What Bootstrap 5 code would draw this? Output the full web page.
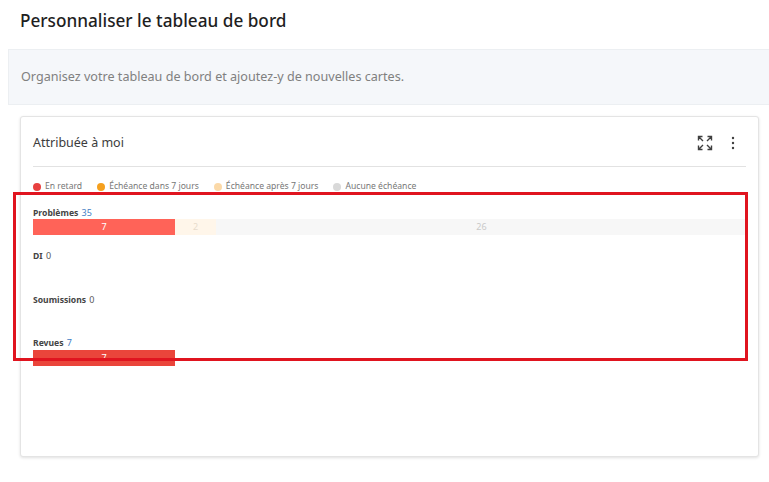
<!DOCTYPE html>
<html lang="fr"><head><meta charset="utf-8">
<link href="https://cdn.jsdelivr.net/npm/bootstrap@5.3.0/dist/css/bootstrap.min.css" rel="stylesheet">
<style>
html,body{height:482px;overflow:hidden;background:#fff}
body{font-family:"Noto Sans","Liberation Sans",sans-serif;color:#3c3c3c;position:relative}
.pg-head{height:49px;padding:9px 20px 0;margin:0}
.pg-title{font-size:17.2px;font-weight:500;line-height:24px;color:#1f1f1f;margin:0}
.sub-band{margin-left:8px;height:56px;background:#f5f7fa;border:1px solid #eceff2;border-right:0;padding-left:12px;font-size:12.6px;color:#808080}
.main-card{margin:11px 10px 0 20px;height:341px;border:1px solid #e4e4e4;border-radius:3px;box-shadow:0 1px 3px rgba(0,0,0,.12);padding:0 12px}
.card-top{height:50px;border-bottom:1px solid #e2e2e2;padding-top:3px}
.card-name{font-size:12.5px;color:#3c3c3c}
.ico-btn{display:block}
.tool-box{margin-right:7px;gap:18px}
.legend-row{height:38.5px;font-size:8.6px;color:#777;gap:15px;padding-top:1px}
.dot{width:8px;height:8px;border-radius:50%;display:inline-block;margin-right:4px}
.d-red{background:#e8403f}.d-org{background:#f5a01e}.d-pch{background:#fbd9a8}.d-gry{background:#d9d9d9}
.metric{height:43.6px}
.metric-head{font-size:8.6px;line-height:13px;height:13.5px;font-weight:700;color:#444}
.metric-num{font-weight:400;font-size:9px;margin-left:1px;color:#5a5a5a}
.metric-num.lnk{color:#3f80c4}
.bar-track{height:16px;display:flex;margin-right:-1px;font-size:9px;line-height:16px;text-align:center}
.seg{height:16px}
.s-red{background:#ff6358;color:#fff}.s-pch{background:#fff6ea;color:#e7dccd}.s-gry{background:#f7f7f7;color:#c9c9c9}
.s-dark{background:#ea453b;color:#fff}
.callout{position:absolute;left:13px;top:192px;width:735px;height:169px;border:3px solid #e0141f;pointer-events:none}
</style></head><body>
<header class="pg-head"><h1 class="pg-title">Personnaliser le tableau de bord</h1></header>
<div class="sub-band d-flex align-items-center">Organisez votre tableau de bord et ajoutez-y de nouvelles cartes.</div>
<section class="main-card bg-white">
 <div class="card-top d-flex align-items-center justify-content-between">
  <span class="card-name">Attribuée à moi</span>
  <div class="tool-box d-flex align-items-center">
   <svg class="ico-btn" width="16" height="16" viewBox="0 0 16 16" fill="none" stroke="#3f3f3f" stroke-width="1.4"><path d="M1.5 5.5v-4h4M1.5 1.5l4.5 4.5M10.5 1.5h4v4M14.5 1.5L10 6M1.5 10.5v4h4M1.5 14.5L6 10M14.5 10.5v4h-4M14.5 14.5L10 10"/></svg>
   <svg class="ico-btn me-1" width="4" height="14" viewBox="0 0 4 14" fill="#3f3f3f"><circle cx="2" cy="2" r="1.2"/><circle cx="2" cy="7" r="1.2"/><circle cx="2" cy="12" r="1.2"/></svg>
  </div>
 </div>
 <div class="legend-row d-flex align-items-center">
  <span class="d-flex align-items-center"><i class="dot d-red"></i>En retard</span>
  <span class="d-flex align-items-center"><i class="dot d-org"></i>Échéance dans 7 jours</span>
  <span class="d-flex align-items-center"><i class="dot d-pch"></i>Échéance après 7 jours</span>
  <span class="d-flex align-items-center"><i class="dot d-gry"></i>Aucune échéance</span>
 </div>
 <div class="metric"><div class="metric-head">Problèmes <span class="metric-num lnk">35</span></div>
  <div class="bar-track"><div class="seg s-red" style="width:142px">7</div><div class="seg s-pch" style="width:41px">2</div><div class="seg s-gry flex-grow-1">26</div></div></div>
 <div class="metric"><div class="metric-head">DI <span class="metric-num">0</span></div></div>
 <div class="metric"><div class="metric-head">Soumissions <span class="metric-num">0</span></div></div>
 <div class="metric"><div class="metric-head">Revues <span class="metric-num lnk">7</span></div>
  <div class="bar-track"><div class="seg s-dark" style="width:142px">7</div></div></div>
</section>
<div class="callout"></div>
<script src="https://cdn.jsdelivr.net/npm/bootstrap@5.3.0/dist/js/bootstrap.bundle.min.js"></script>
</body></html>
